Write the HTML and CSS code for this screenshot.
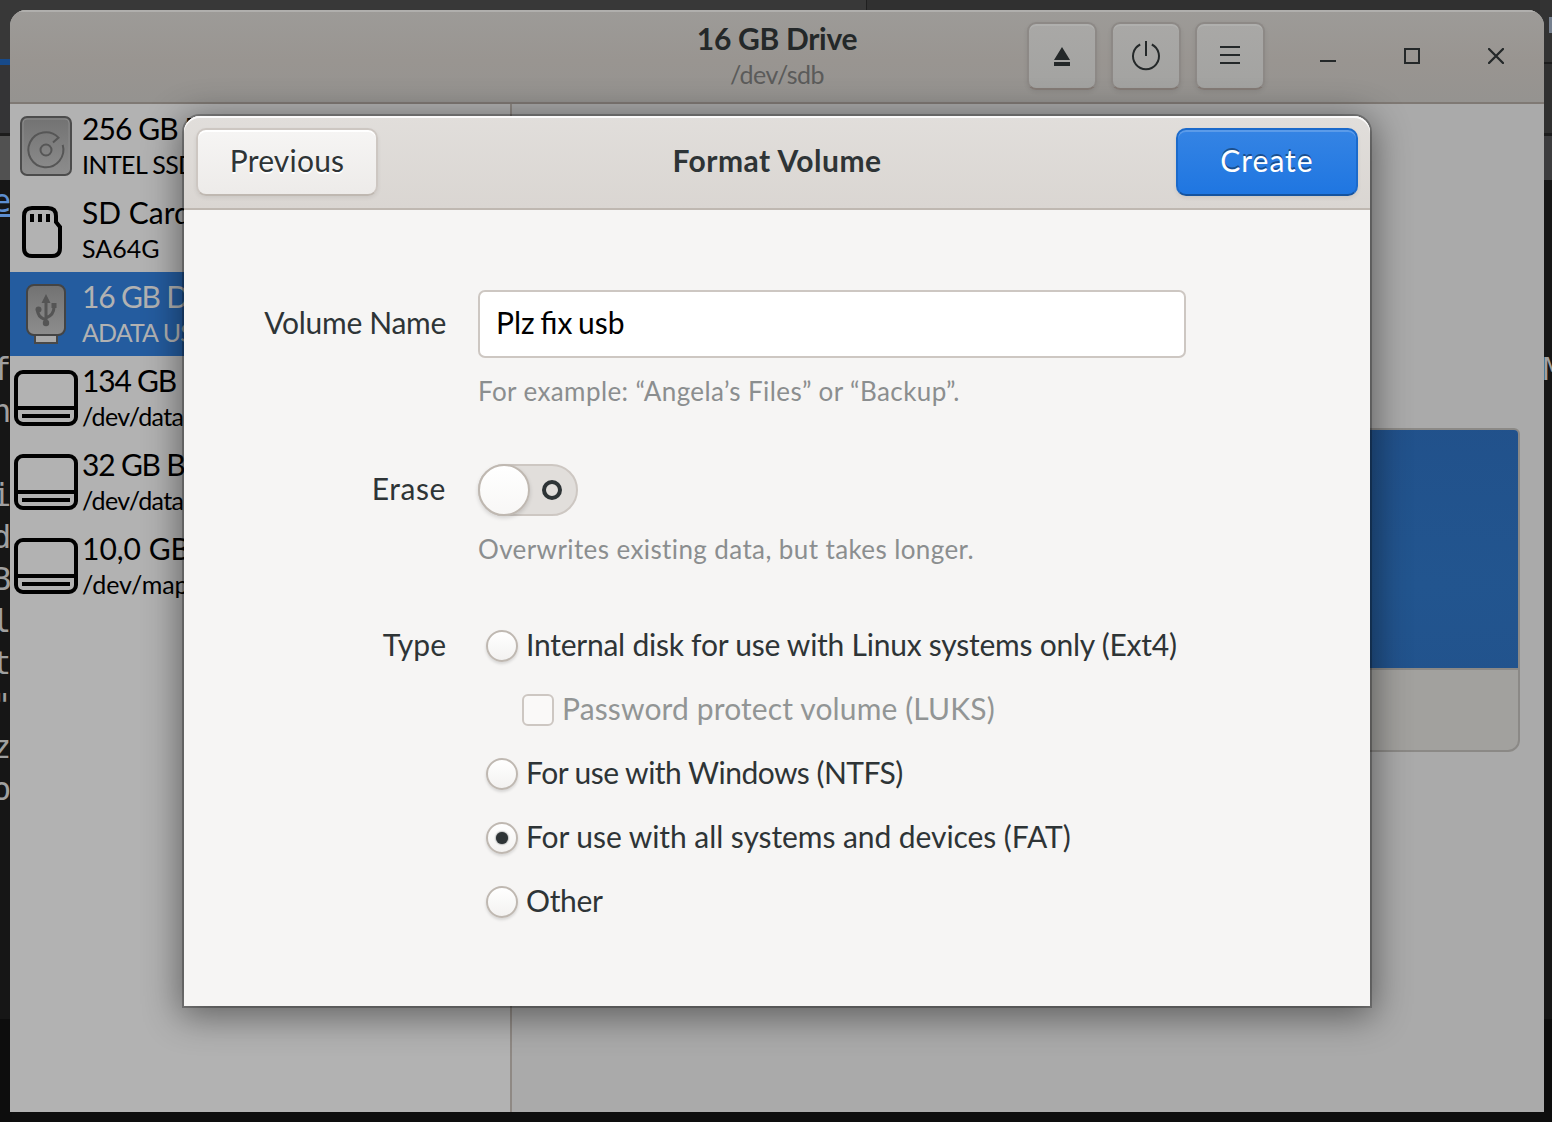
FILE: index.html
```
<!DOCTYPE html>
<html lang="en">
<head>
<meta charset="utf-8">
<title>16 GB Drive</title>
<link rel="stylesheet" href="styles.css">
</head>
<body>
<svg class="defs" width="0" height="0" aria-hidden="true">
  <defs>
    <linearGradient id="metal" x1="0" y1="0" x2="0" y2="1"><stop offset="0" stop-color="#727272"/><stop offset="1" stop-color="#8d8d8d"/></linearGradient>
    <symbol id="drive" viewBox="0 0 64 56">
      <rect x="2" y="2" width="60" height="52" rx="7" fill="none" stroke="#000" stroke-width="4"/>
      <path d="M2 38h60M8 46h48" stroke="#000" stroke-width="4"/>
    </symbol>
  </defs>
</svg>
<div class="desktop">
  <div class="strip left">
    <div class="bar tall"></div>
    <div class="bar tabs"></div>
    <div class="term"><p class="link">e</p><p></p><p></p><p></p><p>f</p><p>n</p><p></p><p>i</p><p>d</p><p>B</p><p>l</p><p>t</p><p>"</p><p>z</p><p>o</p></div>
    <div class="below"></div>
  </div>
  <div class="strip right">
    <div class="bar tall"><span class="glyph"></span></div>
    <div class="bar tabs"></div>
    <div class="term"><p></p><p></p><p></p><p></p><p>M</p></div>
    <div class="below"></div>
  </div>

  <main class="window">
    <header class="headerbar">
      <div class="titles">
        <h1>16 GB Drive</h1>
        <p>/dev/sdb</p>
      </div>
      <div class="controls">
        <button class="tool"><svg width="20" height="24"><path d="M10 3 18 16H2zM2 18h16v4H2z" fill="#242829"/></svg></button>
        <button class="tool"><svg width="32" height="32" fill="none" stroke="#242829" stroke-width="2"><path d="M16 1v15M10.200 4.500a13 13 0 1 0 11.600 0"/></svg></button>
        <button class="tool menu"><svg width="20" height="20"><path d="M0 0h20v2H0zM0 8h20v2H0zM0 16h20v2H0z" fill="#242829"/></svg></button>
        <span class="wm"><svg width="16" height="16"><path d="M0 12h16v2H0z" fill="#242829"/></svg></span>
        <span class="wm"><svg width="16" height="16"><path d="M1 1h14v14H1z" fill="none" stroke="#242829" stroke-width="2"/></svg></span>
        <span class="wm"><svg width="16" height="16"><path d="M1 1l14 14M15 1L1 15" stroke="#242829" stroke-width="2.300" stroke-linecap="round"/></svg></span>
      </div>
    </header>
    <div class="panes">
      <ul class="devices">
        <li><span class="ico"><svg width="52" height="60"><rect x="1" y="1" width="50" height="58" rx="6" fill="url(#metal)" stroke="#4c4c4c" stroke-width="2"/><rect x="3" y="3" width="46" height="54" rx="4" fill="none" stroke="#8b8b8b"/><g fill="none" stroke="#565656" stroke-width="2"><circle cx="26" cy="34" r="5.500"/><path d="M33 26.500l5.500-4.900A17.500 17.500 0 1 0 42.700 28.900"/></g></svg></span><div><b class="tight">256 GB D</b><i>INTEL SSD</i></div></li>
        <li><span class="ico sd"><svg width="40" height="52"><path d="M10 2h16q8 0 8 8v6l4 5v21q0 8-8 8H10q-8 0-8-8V10q0-8 8-8z" fill="none" stroke="#000" stroke-width="4"/><path d="M8 8h4v8H8zM16 8h4v8h-4zM24 8h4v8h-4z"/></svg></span><div><b>SD Card</b><i class="flat">SA64G</i></div></li>
        <li class="on"><span class="ico"><svg width="40" height="60"><path d="M9 50h22v9H9z" fill="#aaa" stroke="#484848" stroke-width="2"/><rect x="1" y="1" width="38" height="50" rx="7" fill="url(#metal)" stroke="#444" stroke-width="2"/><g stroke="#555" stroke-width="3" fill="none"><path d="M20 39V17M20 36Q11 33 11.500 25M20 34q8-3 8-11"/></g><path d="M20 10l4.500 9h-9zM25.500 19h5v5h-5z" fill="#555"/><circle cx="12.500" cy="25.500" r="3" fill="#555"/><circle cx="20" cy="39" r="3.200" fill="#555"/></svg></span><div><b class="tight more">16 GB Drive</b><i class="usb">ADATA USB</i></div></li>
        <li><span class="ico"><svg width="64" height="56"><use href="#drive"/></svg></span><div><b class="tight more">134 GB</b><i>/dev/data/</i></div></li>
        <li><span class="ico"><svg width="64" height="56"><use href="#drive"/></svg></span><div><b class="tight more">32 GB Bl</b><i>/dev/data/</i></div></li>
        <li><span class="ico"><svg width="64" height="56"><use href="#drive"/></svg></span><div><b>10,0 GB</b><i class="flat">/dev/mapp</i></div></li>
      </ul>
      <section class="volumes">
        <div class="grid"><div class="part"></div><div class="tools"></div></div>
      </section>
    </div>
  </main>

  <section class="dialog">
    <header class="dialog-head">
      <button class="prev">Previous</button>
      <h2>Format Volume</h2>
      <button class="create">Create</button>
    </header>
    <form class="form">
      <label class="name">Volume Name</label>
      <div class="entry">Plz fix usb</div>
      <p class="hint">For example: “Angela’s Files” or “Backup”.</p>
      <label class="erase">Erase</label>
      <div class="switch"><span class="knob"></span><span class="off"></span></div>
      <p class="hint">Overwrites existing data, but takes longer.</p>
      <label class="type">Type</label>
      <div class="options">
        <div class="opt ext"><span class="radio"></span><span class="text">Internal disk for use with Linux systems only (Ext4)</span></div>
        <div class="opt luks"><span class="check"></span><span class="text">Password protect volume (LUKS)</span></div>
        <div class="opt ntfs"><span class="radio"></span><span class="text">For use with Windows (NTFS)</span></div>
        <div class="opt fat"><span class="radio sel"></span><span class="text">For use with all systems and devices (FAT)</span></div>
        <div class="opt other"><span class="radio"></span><span class="text">Other</span></div>
      </div>
    </form>
  </section>
</div>
</body>
</html>
```
FILE: styles.css
```
* { box-sizing: border-box; }
body, h1, h2, p, ul, button { margin: 0; padding: 0; }
body { font: 30px/36px Lato, "Open Sans", sans-serif; color: #2e3436; background: #0e0e0e; }
.defs { position: absolute; }
svg { display: block; }
.desktop { position: relative; width: 1552px; height: 1122px; padding: 10px 8px 10px 10px; overflow: hidden; background: linear-gradient(90deg, #383838 866px, #1f1f1f 866px, #1f1f1f 867px, #303030 867px) 0 0 / 100% 104px no-repeat, #0e0e0e; }

/* terminal windows that show at the edges */
.strip { position: absolute; top: 0; width: 12px; height: 1122px; overflow: hidden; background: #161616; }
.strip.left { left: 0; }
.strip.right { right: 0; }
.bar.tall { height: 136px; border-bottom: 3px solid #1c1c1c; background: linear-gradient(#383838 59px, #174a8a 59px, #174a8a 65px, #343436 65px); }
.right .bar.tall { padding: 17px 0 0 9px; background: linear-gradient(#333 62px, #1c1c1c 62px, #1c1c1c 64px, #303030 64px); }
.glyph { display: block; width: 3px; height: 16px; background: #76808f; }
.bar.tabs { height: 44px; background: #515151; }
.right .bar.tabs { background: #3c3c3e; }
.term { height: 839px; font: 32px/42px "DejaVu Sans Mono", monospace; color: #a0a0a0; }
.term p { height: 42px; margin-left: -8px; }
.term .link { color: #5d8ed0; text-decoration: underline; }
.right .term p { margin-left: 3px; }
.below { height: 103px; background: #0d0d0d; }

.window { position: relative; height: 1102px; display: flex; flex-direction: column; border-radius: 16px 16px 0 0; overflow: hidden; background: #aaa; }
.headerbar { height: 94px; display: grid; grid-template-columns: 1fr; border-bottom: 2px solid #7f7974; background: linear-gradient(#9d9b98, #999591 55%, #959390); box-shadow: inset 0 2px #b0afad; }
.headerbar > * { grid-area: 1 / 1; }
.titles { text-align: center; padding-top: 10px; color: #242829; }
h1, h2 { font-size: 30px; line-height: 36px; font-weight: 700; }
h1 { letter-spacing: -.3px; }
.titles p { font-size: 25px; line-height: 37px; color: #5b5b5a; letter-spacing: -.5px; }
.controls { display: flex; justify-content: flex-end; gap: 14px; padding: 12px 13px 0 0; }
.tool { width: 70px; height: 68px; display: grid; place-items: center; border: 2px solid #8d8986; border-bottom-color: #847b76; border-radius: 9px; background: linear-gradient(#a9a8a6, #a3a3a1); box-shadow: inset 0 2px #b0b0ae, 0 2px 4px rgba(0,0,0,.08); }
.tool.menu { margin-right: 14px; }
.wm { width: 70px; height: 68px; display: grid; place-items: center; }

.panes { flex: 1; display: flex; }
.devices { width: 502px; list-style: none; border-right: 2px solid #8f8984; background: #b2b2b2; color: #000; }
.devices li { height: 84px; display: flex; align-items: center; }
.devices li.on { background: #245c9f; color: #b2b2b2; }
.ico { width: 72px; display: grid; place-items: center; }
.ico.sd { padding-right: 8px; padding-top: 4px; }
.devices b, .devices i { display: block; height: 36px; line-height: 36px; font-weight: 400; font-style: normal; white-space: nowrap; }
.devices .tight { letter-spacing: -.9px; }
.devices .more { letter-spacing: -1.2px; }
.devices i { font-size: 25px; letter-spacing: -.6px; }
.devices .usb { letter-spacing: -.9px; }
.devices .flat { letter-spacing: 0; }
.volumes { flex: 1; padding: 324px 24px 0 0; display: flex; }
.grid { flex: 1; height: 324px; border: 2px solid #8b8986; border-radius: 6px 6px 12px 12px; overflow: hidden; background: #a2a19e; }
.part { height: 240px; border-bottom: 2px solid #8b8986; background: radial-gradient(ellipse at 90% 65%, #22558f, #21508a); }

.dialog { position: absolute; left: 184px; top: 116px; width: 1186px; height: 890px; border-radius: 16px 16px 0 0; background: #f6f5f4; box-shadow: 0 0 0 2px rgba(0,0,0,.25), 0 6px 36px 4px rgba(0,0,0,.46); }
.dialog-head { height: 94px; display: flex; justify-content: space-between; padding: 12px 12px 0; border-radius: 16px 16px 0 0; border-bottom: 2px solid #bfb8b1; background: linear-gradient(#e1dedb, #dad6d2); box-shadow: inset 0 2px #fbfafa; }
.dialog h2 { line-height: 65px; letter-spacing: .5px; }
.prev, .create { width: 182px; height: 68px; padding-bottom: 4px; font: inherit; border-radius: 10px; }
.prev { letter-spacing: .2px; color: #2e3436; border: 2px solid #cdc7c2; border-bottom-color: #bfb8b1; background: linear-gradient(#f6f5f4, #edebe9); box-shadow: inset 0 2px #fff, 0 2px 4px rgba(0,0,0,.07); text-shadow: 0 2px #fff; }
.create { letter-spacing: 1px; color: #fff; border: 2px solid #1b6acb; border-bottom-color: #15539e; background: linear-gradient(#3584e4, #1f76e1); box-shadow: inset 0 2px #5b9be9, 0 2px 4px rgba(0,0,0,.07); text-shadow: 0 -2px rgba(0,0,0,.4); }

.form { display: grid; grid-template-columns: 262px 708px; column-gap: 32px; grid-template-rows: 68px 106px 52px 98px 320px; padding-top: 80px; }
.form label { text-align: right; line-height: 65px; white-space: nowrap; }
.form .name { letter-spacing: -.3px; }
.form .erase { line-height: 49px; letter-spacing: .6px; }
.form .type { line-height: 61px; }
.entry { padding-left: 16px; line-height: 61px; word-spacing: -2px; color: #000; border: 2px solid #cdc7c2; border-radius: 7px; background: #fff; }
.hint { grid-column: 2; font-size: 26px; line-height: 36px; letter-spacing: .4px; padding-top: 15px; color: #8b8e8f; white-space: nowrap; }
.switch { width: 100px; height: 52px; display: flex; align-items: center; gap: 12px; border: 2px solid #cdc7c2; border-radius: 26px; background: #e1dedb; }
.knob { width: 52px; height: 52px; margin-left: -2px; border: 2px solid #bfb8b1; border-radius: 50%; background: linear-gradient(#fff, #f8f7f6); box-shadow: 0 2px 4px rgba(0,0,0,.15); }
.off { width: 20px; height: 20px; border: 4px solid #2e3436; border-radius: 50%; }
.options { padding-left: 8px; }
.opt { height: 64px; display: flex; align-items: center; gap: 8px; white-space: nowrap; }
.opt .text { padding-bottom: 4px; }
.ext { letter-spacing: -.24px; }
.luks { padding-left: 36px; color: #929595; letter-spacing: .13px; }
.ntfs { letter-spacing: -.52px; }
.fat { letter-spacing: -.07px; }
.other { letter-spacing: -.3px; }
.radio, .check { flex: none; width: 32px; height: 32px; }
.radio { display: grid; place-items: center; border: 2px solid #bfb8b1; border-radius: 50%; background: linear-gradient(#fff, #f3f2f1); box-shadow: 0 2px 3px rgba(0,0,0,.13); }
.radio.sel::after { content: ""; width: 12px; height: 12px; border-radius: 50%; background: #2e3436; box-shadow: 0 0 2px #2e3436; }
.check { border: 2px solid #cdc7c2; border-radius: 6px; background: #faf9f8; }
```
